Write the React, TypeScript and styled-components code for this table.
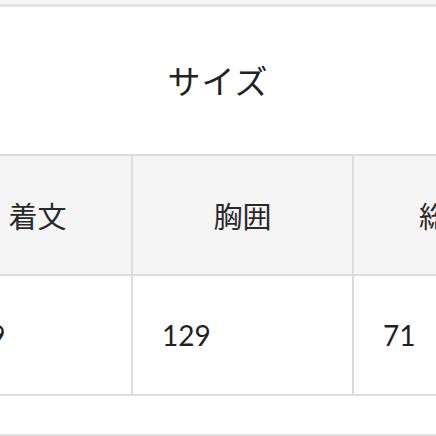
import React from "react";
import styled, { createGlobalStyle } from "styled-components";

const GlobalStyle = createGlobalStyle`
    html, body {
        margin: 0;
        padding: 0;
        background: #ffffff;
    }
    body {
        width: 436px;
        height: 436px;
        overflow: hidden;
    }
`;

const Page = styled.div`
    width: 436px;
    height: 436px;
    overflow: hidden;
    padding-top: 4px;
    box-sizing: border-box;
    background: linear-gradient(#f6f6f6 0, #f6f6f6 4px, #fff 4px);
`;

const Section = styled.div`
    border-top: 3px solid #e2e2e2;
    display: flex;
    flex-direction: column;
`;

const Title = styled.h2`
    margin: 0;
    height: 147px;
    display: flex;
    align-items: center;
    justify-content: center;
    font-family: "Noto Sans CJK JP", "Noto Sans", sans-serif;
    font-weight: 400;
    font-size: 33px;
    color: #222;
    letter-spacing: 1px;
    padding-bottom: 2px;
    box-sizing: border-box;
`;

const TableWrap = styled.div`
    overflow: hidden;
    width: 436px;
`;

const Table = styled.table`
    border-collapse: collapse;
    margin-left: -58px;
    table-layout: fixed;
    width: 600px;
`;

const HeadCell = styled.th<{ $w: number }>`
    width: ${(p) => p.$w}px;
    height: 118px;
    padding: 0;
    border: 2px solid #dcdcdc;
    background: #f5f5f5;
    font-family: "Noto Sans CJK JP", "Noto Sans", sans-serif;
    font-weight: 400;
    font-size: 29px;
    color: #2a2a2a;
    text-align: center;
    white-space: nowrap;
`;

const Cell = styled.td`
    height: 118px;
    padding: 0 0 0 29px;
    border: 2px solid #dcdcdc;
    background: #fff;
    font-family: Lato, "Open Sans", sans-serif;
    font-size: 28px;
    color: #222;
    text-align: left;
    white-space: nowrap;
`;

const Bottom = styled.div`
    height: 38px;
    border-bottom: 2px solid #e2e2e2;
`;

const columns = [
    { label: "着文", value: "79", w: 187 },
    { label: "胸囲", value: "129", w: 219 },
    { label: "総丈", value: "71", w: 188 },
];

const App: React.FC = () => {
    return (
        <Page>
            <GlobalStyle />
            <Section>
                <Title>サイズ</Title>
                <TableWrap>
                    <Table>
                        <thead>
                            <tr>
                                {columns.map((c) => (
                                    <HeadCell key={c.label} $w={c.w}>
                                        {c.label}
                                    </HeadCell>
                                ))}
                            </tr>
                        </thead>
                        <tbody>
                            <tr>
                                {columns.map((c) => (
                                    <Cell key={c.label}>{c.value}</Cell>
                                ))}
                            </tr>
                        </tbody>
                    </Table>
                </TableWrap>
                <Bottom />
            </Section>
        </Page>
    );
};

export default App;
